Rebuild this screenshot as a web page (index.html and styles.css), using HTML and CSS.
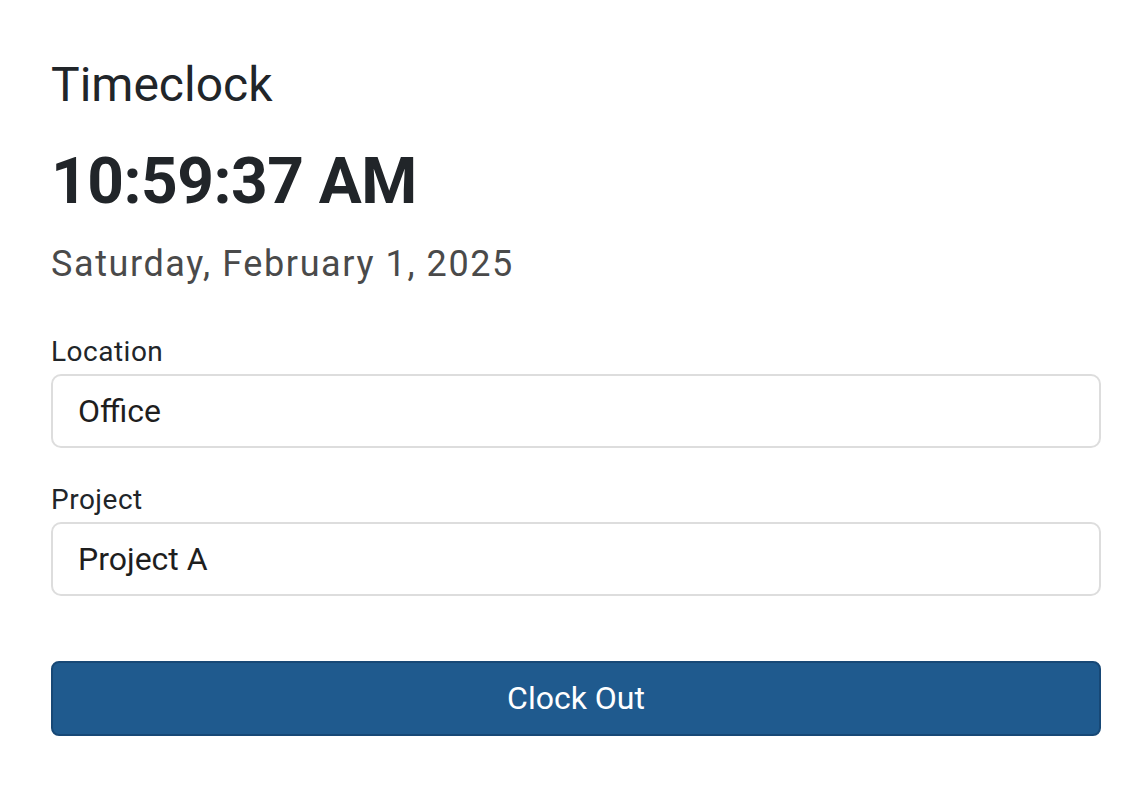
FILE: index.html
```html
<!DOCTYPE html>
<html lang="en">
<head>
<meta charset="utf-8">
<title>Timeclock</title>
<link rel="stylesheet" href="styles.css">
</head>
<body>
<main class="timeclock">
  <h1 class="title">Timeclock</h1>
  <div class="clock">10:59:37 AM</div>
  <div class="date">Saturday, February 1, 2025</div>
  <form class="form">
    <div class="field">
      <label class="label" for="location">Location</label>
      <div class="input" id="location">Office</div>
    </div>
    <div class="field">
      <label class="label" for="project">Project</label>
      <div class="input" id="project">Project A</div>
    </div>
    <button type="button" class="btn">Clock Out</button>
  </form>
</main>
</body>
</html>
```
FILE: styles.css
```css
* { box-sizing: border-box; }
html, body { margin: 0; padding: 0; background: #ffffff; }
body {
  font-family: Roboto, "Liberation Sans", Arial, sans-serif;
  color: #212529;
}
.timeclock {
  width: 1050px;
  margin-left: 51px;
  padding-top: 56px;
}
.title {
  margin: 0;
  font-size: 48px;
  font-weight: 400;
  line-height: 57.6px;
}
.clock {
  margin-top: 29px;
  font-size: 64px;
  font-weight: 700;
  line-height: 77px;
  letter-spacing: -0.5px;
}
.date {
  margin-top: 20px;
  font-size: 36px;
  line-height: 48px;
  letter-spacing: 1.6px;
  color: #4a4a4a;
}
.form {
  margin-top: 43px;
  display: flex;
  flex-direction: column;
}
.field {
  display: flex;
  flex-direction: column;
  margin-bottom: 31px;
}
.field + .field { margin-bottom: 0; }
.label {
  font-size: 28px;
  line-height: 42px;
  letter-spacing: 0.5px;
  color: #212529;
}
.input {
  margin-top: 1px;
  height: 74px;
  border: 2px solid #dddddd;
  border-radius: 10px;
  padding: 0 25px;
  display: flex;
  align-items: center;
  font-size: 32px;
  color: #1e1e1e;
}
.btn {
  margin-top: 65px;
  height: 75px;
  width: 100%;
  background: #1f5a8e;
  border: 2px solid #174876;
  border-radius: 8px;
  color: #ffffff;
  font-family: Roboto, "Liberation Sans", Arial, sans-serif;
  font-size: 32px;
  padding: 0;
}
```
